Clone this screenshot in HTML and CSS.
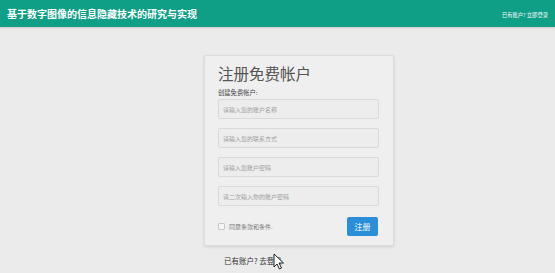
FILE: index.html
```html
<!DOCTYPE html>
<html lang="zh">
<head>
  <meta charset="UTF-8">
  <meta name="viewport" content="width=device-width,initial-scale=1">
  <title>注册</title>
  <link rel="stylesheet" href="styles.css">
</head>
<body>

  <header class="topbar">
    <h1>基于数字图像的信息隐藏技术的研究与实现</h1>
    <a class="top-link" href="#">已有账户? 立即登录</a>
  </header>

  <main class="page">
    <form class="card">
      <h2>注册免费帐户</h2>
      <label class="caption">创建免费帐户:</label>
      <input class="field" placeholder="请输入您的账户名称">
      <input class="field" placeholder="请输入您的联系方式">
      <input class="field" placeholder="请输入您账户密码">
      <input class="field" placeholder="请二次输入你的账户密码">
      <div class="actions">
        <label class="agree"><span class="box"></span>同意条款和条件.</label>
        <button type="button" class="btn">注册</button>
      </div>
    </form>
    <p class="login">已有账户? 去登录</p>

    <!-- 鼠标指针 -->
    <svg class="cursor" width="12" height="17" viewBox="0 0 12 17">
      <path d="M1 1 L1 14 L4 11 L6.5 16 L8.5 15 L6 10 L10.5 10 Z" fill="#fff" stroke="#222" stroke-width="1" stroke-linejoin="round"/>
    </svg>
  </main>

</body>
</html>
```

FILE: styles.css
```css
*{margin:0;padding:0;box-sizing:border-box;}
html,body{
  height:100%;
  overflow:hidden;
  background:#ebebeb;
  font-family:"Noto Sans CJK SC","Liberation Sans",sans-serif;
  color:#333;
}
/* Barra superior */
.topbar{
  height:27px; padding:0 7px;
  display:flex; align-items:center; justify-content:space-between;
  background:#0f9e86;
  box-shadow:0 1px 2px rgba(0,0,0,0.15);
}
.topbar h1{
  font-size:10px; font-weight:bold;
  color:#fff; letter-spacing:0;
}
.top-link{
  font-size:5.3px; color:#fff;
  text-decoration:none; margin-top:2px;
}
.page{
  position:relative;
  padding:28px 0 0 204px;
}
/* Tarjeta de registro */
.card{
  width:190px;
  padding:7px 15px 9px 13px;
  background:#efefef;
  border:1px solid #dcdcdc;
  border-radius:2px;
  box-shadow:0 1px 3px rgba(0,0,0,0.12);
  display:flex; flex-direction:column;
}
.card h2{
  font-size:15.5px; font-weight:normal;
  color:#555; line-height:20px;
  margin-bottom:6px;
}
.caption{
  font-size:6.3px; color:#444;
  line-height:8px; margin-bottom:2px;
}
.field{
  width:161px; height:20px;
  padding:0 4px; margin-bottom:9px;
  border:1px solid #dadada; border-radius:2px;
  background:#ededed;
  font-family:inherit; font-size:6px; color:#555;
  outline:none;
}
.field::placeholder{color:#a0a0a0;}
.actions{
  display:flex; align-items:center; justify-content:space-between;
  margin-top:2px;
}
.agree{
  display:flex; align-items:center; gap:4px;
  font-size:6px; color:#777;
}
.box{
  width:7px; height:7px;
  border:1px solid #c8c8c8; border-radius:1px;
  background:#f6f6f6;
}
.btn{
  width:31px; height:19px;
  border:none; border-radius:2px;
  background:#2a8fd8; color:#fff;
  font-family:inherit; font-size:8px;
}
.login{
  font-size:7.5px; color:#333;
  margin:9px 0 0 20px;
}
.cursor{
  position:absolute; left:273px; top:226px;
}
```
